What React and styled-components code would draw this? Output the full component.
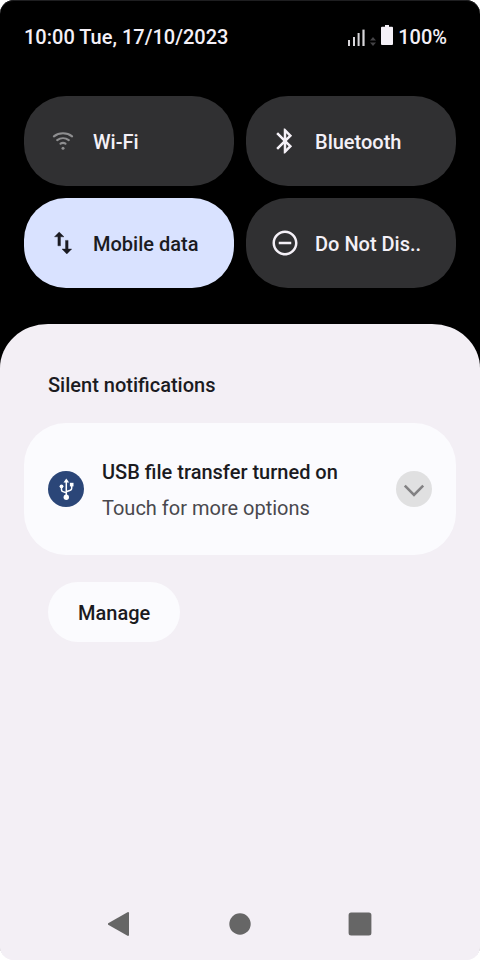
import React from 'react';
import styled, { createGlobalStyle } from 'styled-components';
import { MdBluetooth, MdRemoveCircleOutline } from 'react-icons/md';

const GlobalStyle = createGlobalStyle`
  * {
    box-sizing: border-box;
  }

  body {
    margin: 0;
    background: #fff;
    font-family: Roboto, "Liberation Sans", sans-serif;
  }

  button {
    border: 0;
    font: inherit;
    cursor: pointer;
  }

  svg {
    display: block;
    flex: none;
  }
`

// Styled components
const Screen = styled.div`
  display: flex;
  flex-direction: column;
  min-height: 100vh;
  background: linear-gradient(#000 50%, #f3eff5 50%);
  box-shadow: inset 0 1px #1e1e20;
  border-radius: 14px;
  overflow: hidden;
`

const StatusBar = styled.header`
  display: flex;
  align-items: center;
  justify-content: space-between;
  height: 72px;
  padding: 2px 33px 0 24px;
  color: #f4f0f7;
  font-size: 20px;
  font-weight: 500;
`

const StatusIcons = styled.div`
  display: flex;
  align-items: center;
  gap: 5px;
`

const Tiles = styled.section`
  display: grid;
  grid-template-columns: 1fr 1fr;
  gap: 12px;
  padding: 24px 24px 36px;
`

const TileButton = styled.button`
  display: flex;
  align-items: center;
  gap: 15px;
  height: 90px;
  padding: 0 24px;
  border-radius: 42px;
  background: ${props => props.$active ? '#d9e2ff' : '#303032'};
  color: ${props => props.$active ? '#1b1b22' : '#f4f0f7'};
  font-size: 20px;
  font-weight: 500;
  white-space: nowrap;

  span {
    padding-top: 2px;
  }
`

const Panel = styled.main`
  display: flex;
  flex: 1;
  flex-direction: column;
  padding: 48px 24px 0;
  background: #f3eff5;
  border-radius: 48px 48px 0 0 / 44px 44px 0 0;
`

const SectionTitle = styled.h2`
  margin: 0 24px 25px;
  color: #1b1b1f;
  font-size: 20px;
  font-weight: 500;
  line-height: 26px;
`

const Card = styled.article`
  display: flex;
  align-items: center;
  gap: 18px;
  height: 132px;
  padding: 0 24px;
  background: #fbfbfe;
  border-radius: 42px;
`

const CardText = styled.div`
  flex: 1;
  padding-top: 2px;
  font-size: 20px;
  line-height: 36px;
`

const CardTitle = styled.h3`
  margin: 0;
  color: #1b1b1f;
  font-size: inherit;
  font-weight: 500;
`

const CardBody = styled.p`
  margin: 0;
  color: #49484d;
`

const ExpandButton = styled.button`
  width: 36px;
  height: 36px;
  padding: 0;
  border-radius: 50%;
  background: #e0e0e1;
`

const ManageButton = styled.button`
  align-self: flex-start;
  height: 60px;
  margin: 27px 24px;
  padding: 2px 30px 0;
  border-radius: 30px;
  background: #fbfbfe;
  color: #1b1b1f;
  font-size: 20px;
  font-weight: 500;
`

const NavBar = styled.nav`
  display: flex;
  align-items: center;
  justify-content: space-around;
  height: 72px;
  margin-top: auto;
  padding: 0 36px;
`

const NavButton = styled.button`
  padding: 12px;
  background: none;
`

const SignalIcon = () => (
  <svg width="28" height="24" viewBox="0 0 28 24" fill="#d8d6da">
    <rect x="0" y="15" width="2" height="6" />
    <rect x="5" y="12" width="2" height="9" />
    <rect x="9.6" y="8" width="2" height="13" />
    <rect x="14.4" y="4.6" width="2.2" height="16.4" />
    <path d="M22 15.5l3-3.5 3 3.5zM22 17.5h6l-3 3.5z" fill="#444346" />
  </svg>
)

const BatteryIcon = () => (
  <svg width="12" height="24" viewBox="0 0 12 24" fill="#f4f0f7">
    <path d="M4 0h4v1.7h3a1 1 0 0 1 1 1V19a1 1 0 0 1-1 1H1a1 1 0 0 1-1-1V2.7a1 1 0 0 1 1-1h3z" />
  </svg>
)

const WifiIcon = () => (
  <svg width="30" height="30" viewBox="0 0 30 30" fill="none" stroke="#8e8e90" strokeWidth="2.1" strokeLinecap="round">
    <path d="M5.9 10.3C11 6.3 19 6.3 24.1 10.3" />
    <path d="M9.2 14.2C12.6 11.6 17.4 11.6 20.8 14.2" />
    <path d="M12.5 17.7C14 16.7 16 16.7 17.5 17.7" />
    <circle cx="15" cy="22.2" r="1.5" fill="#8e8e90" stroke="none" />
  </svg>
)

const DataIcon = () => (
  <svg width="30" height="30" viewBox="0 0 30 30" fill="currentColor" stroke="currentColor" strokeWidth=".4">
    <path d="M11.2 4l4.8 4.8h-3.5v9h-2.6v-9H6.5z" />
    <path d="M18.8 26L14 21h3.5v-8.6h2.6V21h3.6z" />
  </svg>
)

const UsbIcon = () => (
  <svg width="36" height="36" viewBox="0 0 36 36" fill="#fff">
    <circle cx="18" cy="18" r="18" fill="#2b4678" />
    <path d="M18.3 7.4l2.8 4h-5.6z" />
    <path
      d="M18.3 10v16M13.5 15.5v3.2q0 1.5 1.4 1.9l3.4 1.2M23.7 14v3.2q0 1.5-1.4 2.1l-4 1.5"
      fill="none"
      stroke="#fff"
      strokeWidth="1.5"
    />
    <circle cx="13.5" cy="15.3" r="1.9" />
    <rect x="21.9" y="11.8" width="3.6" height="3.6" />
    <circle cx="18.3" cy="26.2" r="2.7" />
  </svg>
)

const ChevronIcon = () => (
  <svg width="36" height="36" viewBox="0 0 36 36" fill="none" stroke="#828183" strokeWidth="2.6">
    <path d="M8.8 14.6l9.2 9.2 9.2-9.2" />
  </svg>
)

const tiles = [
  { label: 'Wi-Fi', icon: <WifiIcon /> },
  { label: 'Bluetooth', icon: <MdBluetooth size={30} /> },
  { label: 'Mobile data', icon: <DataIcon />, active: true },
  { label: 'Do Not Dis..', icon: <MdRemoveCircleOutline size={30} /> },
]

const Tile = ({label, icon, active}) => {
  return (
    <TileButton type='button' $active={active} aria-pressed={!!active}>
      {icon}
      <span>{label}</span>
    </TileButton>
  )
}

const App = () => {
  return (
    <>
      <GlobalStyle />
      <Screen>
        <StatusBar>
          <span>10:00 Tue, 17/10/2023</span>
          <StatusIcons>
            <SignalIcon />
            <BatteryIcon />
            <span>100%</span>
          </StatusIcons>
        </StatusBar>
        <Tiles>
          {tiles.map(tile => <Tile key={tile.label} {...tile} />)}
        </Tiles>
        <Panel>
          <SectionTitle>Silent notifications</SectionTitle>
          <Card>
            <UsbIcon />
            <CardText>
              <CardTitle>USB file transfer turned on</CardTitle>
              <CardBody>Touch for more options</CardBody>
            </CardText>
            <ExpandButton type='button' aria-label='Expand'>
              <ChevronIcon />
            </ExpandButton>
          </Card>
          <ManageButton type='button'>Manage</ManageButton>
          <NavBar>
            <NavButton type='button' aria-label='Back'>
              <svg width="24" height="24" viewBox="0 0 24 24" fill="#666">
                <path d="M.2 11.2L19.5.2q1.5-.6 1.5 1v21.6q0 1.6-1.5 1L.2 12.8q-.6-.8 0-1.6z" />
              </svg>
            </NavButton>
            <NavButton type='button' aria-label='Home'>
              <svg width="24" height="24" viewBox="0 0 24 24" fill="#666">
                <circle cx="12" cy="12" r="10.7" />
              </svg>
            </NavButton>
            <NavButton type='button' aria-label='Recent apps'>
              <svg width="24" height="24" viewBox="0 0 24 24" fill="#666">
                <rect x=".6" y=".6" width="22.8" height="22.8" rx="2.5" />
              </svg>
            </NavButton>
          </NavBar>
        </Panel>
      </Screen>
    </>
  )
}

export default App;
